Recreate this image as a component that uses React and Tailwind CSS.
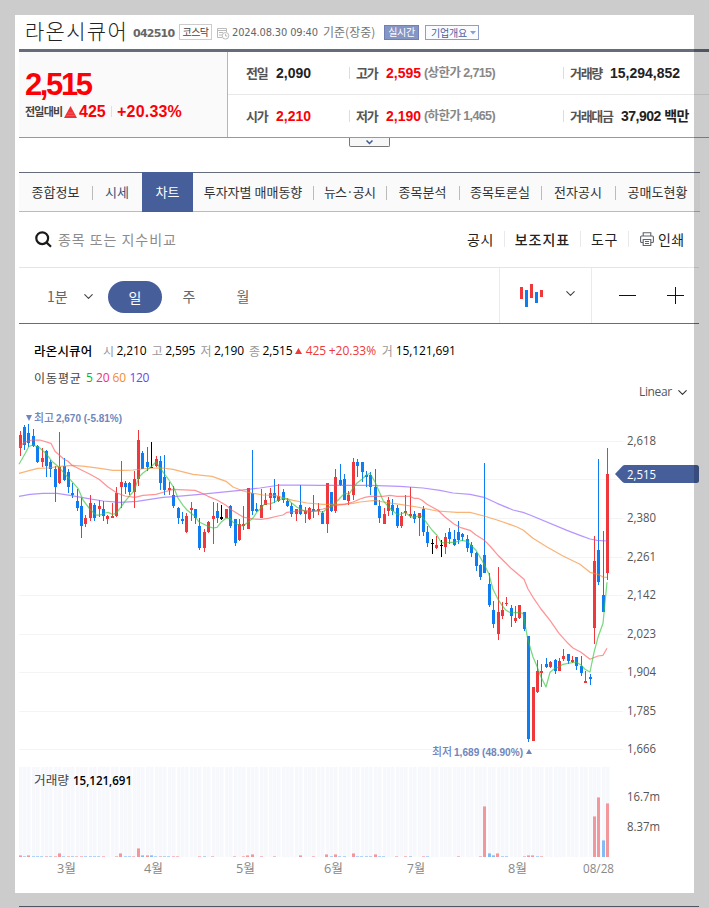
import { ChevronDown } from 'lucide-react';

const UP   = '#ee383b';
const DOWN = '#0f7df2';

const TABS = [
  { label: '종합정보',           cls: 'w-[73px]' },
  { label: '시세',               cls: 'w-[50px] text-[#33527f]', bar: true },
  { label: '차트',               cls: 'w-[51px]', active: true },
  { label: '투자자별 매매동향',  cls: 'w-[120px]' },
  { label: '뉴스·공시',          cls: 'w-[73px] tracking-[-0.8px]', bar: true },
  { label: '종목분석',           cls: 'w-[73px]', bar: true },
  { label: '종목토론실',         cls: 'w-[82px]', bar: true },
  { label: '전자공시',           cls: 'w-[74px]', bar: true },
  { label: '공매도현황',         cls: 'w-[85px]', bar: true },
];

// high, body top, body bottom, low, direction (u = up, d = down, n = flat)
const CANDLES = [
  [431, 435, 448, 456, 'u'], [425, 427, 445, 450, 'd'], [424, 433, 443, 447, 'd'], [429, 436, 446, 447, 'd'],
  [445, 446, 462, 463, 'd'], [448, 458, 462, 467, 'u'], [450, 451, 466, 477, 'd'], [460, 462, 469, 477, 'd'],
  [466, 469, 487, 502, 'd'], [432, 467, 483, 484, 'u'], [458, 466, 480, 481, 'd'], [469, 472, 487, 493, 'd'],
  [483, 493, 495, 498, 'd'], [489, 501, 508, 511, 'd'], [498, 506, 526, 538, 'd'], [515, 518, 524, 527, 'u'],
  [495, 503, 518, 521, 'u'], [503, 505, 518, 521, 'd'], [500, 506, 509, 517, 'u'], [501, 509, 516, 521, 'd'],
  [515, 516, 519, 524, 'u'], [503, 516, 518, 518, 'u'], [487, 493, 516, 517, 'u'], [461, 482, 487, 508, 'u'],
  [481, 483, 487, 494, 'd'], [482, 483, 492, 495, 'd'], [471, 479, 492, 508, 'u'], [430, 440, 479, 486, 'u'],
  [451, 453, 469, 469, 'd'], [447, 462, 467, 471, 'd'], [442, 467, 468, 468, 'n'], [456, 459, 466, 467, 'u'],
  [456, 461, 483, 490, 'd'], [455, 477, 490, 495, 'd'], [482, 488, 490, 495, 'u'], [486, 495, 506, 508, 'd'],
  [507, 508, 518, 524, 'd'], [512, 519, 521, 524, 'd'], [513, 516, 532, 533, 'u'], [502, 508, 510, 521, 'u'],
  [509, 509, 518, 524, 'd'], [518, 526, 548, 550, 'd'], [529, 532, 548, 552, 'u'], [521, 522, 532, 533, 'u'],
  [502, 516, 519, 544, 'u'], [503, 511, 518, 523, 'd'], [505, 517, 519, 520, 'n'], [509, 509, 518, 518, 'u'],
  [505, 506, 526, 528, 'd'], [519, 519, 543, 546, 'd'], [519, 524, 540, 541, 'u'], [506, 524, 526, 530, 'u'],
  [488, 488, 529, 529, 'u'], [450, 493, 511, 515, 'd'], [503, 509, 511, 512, 'd'], [489, 505, 518, 518, 'u'],
  [493, 500, 505, 505, 'u'], [488, 493, 498, 510, 'u'], [479, 493, 498, 503, 'd'], [484, 496, 501, 502, 'u'],
  [489, 492, 500, 503, 'd'], [498, 501, 506, 507, 'd'], [503, 506, 514, 517, 'd'], [509, 509, 514, 521, 'u'],
  [485, 505, 514, 515, 'd'], [507, 511, 514, 523, 'u'], [507, 508, 519, 520, 'u'], [495, 509, 511, 518, 'd'],
  [503, 509, 511, 515, 'u'], [511, 513, 524, 524, 'd'], [483, 483, 524, 533, 'u'], [492, 492, 511, 512, 'd'],
  [469, 477, 511, 513, 'u'], [464, 480, 485, 486, 'd'], [474, 479, 500, 500, 'd'], [491, 495, 501, 505, 'u'],
  [458, 462, 495, 500, 'u'], [459, 462, 466, 477, 'd'], [462, 462, 472, 482, 'd'], [471, 475, 477, 487, 'd'],
  [472, 475, 487, 495, 'd'], [469, 487, 505, 505, 'd'], [500, 506, 518, 523, 'd'], [508, 514, 524, 524, 'u'],
  [497, 500, 511, 516, 'u'], [499, 505, 511, 515, 'd'], [505, 508, 526, 528, 'd'], [512, 516, 526, 528, 'u'],
  [495, 511, 513, 516, 'u'], [487, 514, 516, 518, 'u'], [511, 514, 519, 523, 'd'], [513, 513, 518, 536, 'u'],
  [506, 509, 532, 536, 'd'], [526, 532, 543, 547, 'd'], [539, 543, 544, 554, 'n'], [536, 545, 548, 549, 'u'],
  [540, 545, 546, 557, 'n'], [533, 537, 547, 554, 'u'], [528, 532, 539, 544, 'd'], [530, 539, 545, 546, 'd'],
  [521, 532, 540, 544, 'd'], [533, 534, 537, 541, 'd'], [535, 539, 548, 552, 'd'], [542, 545, 553, 557, 'd'],
  [552, 553, 566, 571, 'd'], [564, 565, 577, 580, 'd'], [463, 555, 573, 573, 'd'], [573, 584, 605, 607, 'd'],
  [601, 610, 624, 628, 'd'], [567, 612, 634, 640, 'u'], [602, 610, 616, 619, 'u'], [597, 603, 604, 606, 'u'],
  [605, 608, 616, 627, 'd'], [606, 618, 621, 623, 'u'], [605, 605, 618, 619, 'u'], [612, 612, 629, 631, 'd'],
  [636, 636, 739, 742, 'd'], [687, 687, 741, 741, 'u'], [660, 671, 692, 693, 'u'], [664, 671, 673, 687, 'u'],
  [658, 664, 667, 668, 'd'], [661, 662, 667, 668, 'u'], [659, 660, 671, 674, 'd'], [658, 661, 671, 671, 'u'],
  [649, 656, 659, 661, 'u'], [654, 654, 661, 664, 'd'], [656, 660, 662, 663, 'u'], [657, 657, 666, 670, 'd'],
  [656, 666, 673, 676, 'd'], [671, 681, 683, 683, 'u'], [674, 677, 679, 685, 'd'], [536, 561, 628, 644, 'u'],
  [459, 550, 582, 585, 'd'], [531, 595, 612, 612, 'd'], [448, 474, 573, 580, 'u'],
];

const AVERAGES = [
  { color: '#8f5bff', points: '19,496 30,494 43,493 57,493 70,495 87,498 103,500.7 120,502 137,501 150,499 163,497 177,496 200,494 220,492 240,490 260,487.7 280,484.7 300,484.7 320,485 370,485 400,486 423,487.7 440,490 453,492.7 470,494 484,497 497,503 513,509.7 523,512 530,514.7 567,530 580,535 590,538.7 597,540 607,540.7' },
  { color: '#f78a2d', points: '19,473 30,470 38,468 48,467.7 60,466 73,465 85,466 100,468 113,470 123,470 133,469.7 150,467.7 163,467.7 173,469 193,474 212,476 226,481 233,486.7 243,490.7 253,493 263,494.7 275,495 282,497 293,500 307,502.7 323,504 340,504 353,503 360,501.7 375,500 383,501.7 400,504 417,506.7 437,510.7 457,512 470,512 484,515.7 497,519.7 503,521.7 517,526.7 523,529.7 533,538 547,546.7 563,555.7 580,564 590,572 598,574 603,576.7 607,577' },
  { color: '#ff5b60', points: '19,446.7 25,441.7 32,439.7 40,439.7 51,443 55,451 64,459 68,461 72,465 82,470 90,474 99,479 108,486.7 117,492.7 125,495.7 135,497 143,495 156,494 164,491.7 173,489 195,490 200,492 208,496 217,499.7 226,505 232,510 237,513 243,516.7 253,518.7 261,519 268,518 278,515.7 283,514.7 287,512 295,511 305,510 313,511 323,508.7 335,505 345,504 353,501.7 360,498.7 365,497 370,496 383,496 390,495 397,496 410,496 414,498 418,498 422,500 427,504 432,506.7 438,510 445,516.7 454,523.7 460,527 470,530 476,534.7 484,539.7 490,545.7 498,555 507,564 511,568 524,579 528,588.7 533,597 541,608.7 550,620 559,633 568,643 573,647.7 581,652 590,659 593,657.7 598,655.7 603,655 607,648' },
  { color: '#2fc43a', points: '19,464 25.3,453 29,446 33,444.7 39,447 46.7,454 52,461 60,468 65,474 70,479 78,488 83,499.7 90,509 96,514.7 100,514.7 105,512.7 108,512 112.7,514 116,513 120,508 125,501 130,495 134,490.7 139,476.7 143,472.7 148,469 152,465.7 156,461.7 160,467.7 164,473 169,479.7 174,487.7 178,497.7 183,505 187,509.7 191,513 195,516 199,521.7 204,524 208,526 213,527.7 217,527 221,522 226,518 230,518 233,522 237,524 243,525.7 248,522 253,517.7 257,511.7 261,508 265,503 270,503.7 274,502 278,500 283,498 288,499 292,503 297,507 303,510 308,511.7 313,511 318,510.7 323,512 327,508 333,505 337,501 341,496.7 345,492.7 349,494 353,487.7 357,482.7 362,479 366,475 370,473 375,481.7 379,491 383,500 388,506 392,510 397,514 401,513.7 405,512 410,516 414,517 418,515.7 422,516 427,523 432,529.7 437,535 441,542 445,542.7 450,542 454,542 458,541 462,540 467,541 471,545 476,550 480,556.7 484,563.7 489,574 493,589 498,599 502,605 506,610 511,612.7 518,612 523,613 528,640 533,656.7 537,666 541,676.7 546,686.7 550,672 555,668 559,666.7 563,664 568,663 576,661.7 581,664.7 585,669 590,671.7 594,652 598,637 603,623 607,582' },
];

// x, height, direction
const VOLUMES = [
  [20, 2, 'u'], [24, 1, 'd'], [28, 2, 'u'], [33, 1, 'd'], [37, 1, 'd'], [41, 1, 'd'], [46, 1, 'u'], [50, 1, 'd'],
  [55, 1, 'u'], [59, 4, 'u'], [63, 1, 'd'], [68, 1, 'u'], [72, 1, 'd'], [76, 1, 'u'], [81, 1, 'u'], [85, 1, 'd'],
  [90, 1, 'd'], [94, 1, 'd'], [98, 1, 'd'], [103, 1, 'u'], [116, 1, 'u'], [120, 4, 'u'], [125, 1, 'd'], [129, 1, 'd'],
  [133, 1, 'u'], [138, 9, 'u'], [142, 2, 'd'], [147, 2, 'u'], [151, 2, 'd'], [155, 1, 'd'], [160, 1, 'u'], [164, 1, 'd'],
  [168, 1, 'd'], [173, 1, 'u'], [177, 1, 'u'], [199, 1, 'u'], [204, 1, 'd'], [212, 1, 'u'], [234, 1, 'u'], [243, 1, 'u'],
  [247, 2, 'u'], [252, 3, 'u'], [261, 1, 'u'], [274, 1, 'u'], [300, 2, 'u'], [313, 1, 'u'], [326, 3, 'u'], [331, 1, 'd'],
  [335, 3, 'u'], [339, 1, 'd'], [344, 1, 'd'], [353, 4, 'u'], [357, 1, 'd'], [361, 1, 'd'], [366, 1, 'd'], [370, 1, 'd'],
  [375, 3, 'u'], [379, 1, 'd'], [383, 1, 'd'], [396, 1, 'u'], [405, 1, 'u'], [410, 1, 'd'], [423, 1, 'u'], [427, 1, 'd'],
  [458, 1, 'u'], [480, 1, 'u'], [484, 51, 'u'], [489, 4, 'd'], [493, 2, 'd'], [497, 4, 'u'], [502, 1, 'd'], [506, 1, 'd'],
  [524, 1, 'u'], [528, 2, 'u'], [532, 2, 'u'], [537, 1, 'd'], [541, 1, 'u'], [594, 41, 'u'], [598, 60, 'u'], [603, 17, 'd'],
  [607, 54, 'u'],
];

// the line at 479 has its label under the price tag
const GRID = [
  [441, '2,618'], [479, ''], [518, '2,380'], [557, '2,261'], [595, '2,142'],
  [634, '2,023'], [672, '1,904'], [711, '1,785'], [749, '1,666'],
];

const MONTHS = [
  [57, 19, '3월'], [144, 19, '4월'], [236, 19, '5월'], [324, 19, '6월'], [407, 18, '7월'], [508, 19, '8월'], [583, 31, '08/28'],
];

const sans  = "font-['Liberation_Sans','Noto_Sans_CJK_KR',sans-serif]";
const ui    = "font-['Open_Sans','Noto_Sans_CJK_KR',sans-serif]";
const kr    = "font-['Noto_Sans_CJK_KR',sans-serif]";
const small = "font-['DejaVu_Sans_Condensed','DejaVu_Sans','Noto_Sans_CJK_KR',sans-serif]";

const candleX = (i) => Math.floor(20.22 + i * 4.3835);
const tone = (d) => (d === 'u' ? UP : d === 'd' ? DOWN : '#000');

function Header() {
  return (
    <div className="flex h-[34px] pl-[6px] whitespace-nowrap">
      <h1 className={`w-[108px] text-[21px] leading-[30px] font-light tracking-[1.3px] text-[#222] ${kr}`}>라온시큐어</h1>
      <span className="w-[46px] pt-[10px] text-[11px] leading-[17px] font-bold text-[#666] tracking-[-0.75px] font-['DejaVu_Sans',sans-serif]">042510</span>
      <span className={`mt-[9px] w-[33px] h-4 border border-[#ccc] text-[10px] leading-[13px] text-center text-[#444] tracking-[-0.6px] ${kr}`}>코스닥</span>
      <svg className="mt-[12px] ml-[5px]" width="13" height="13" viewBox="0 0 13 13" fill="none" stroke="#bbb">
        <path d="M5 10.5H.5V1.5h9V5M.5 3.5h9M2 5.5h4M2 8h3" />
        <circle cx="8.5" cy="8.8" r="3.3" />
        <path d="M8.5 6.8v2.2h1.8" />
      </svg>
      <span className={`ml-[2px] w-[91px] pt-[9px] text-[11px] leading-[17px] text-[#666] tracking-[-0.15px] ${small}`}>2024.08.30 09:40</span>
      <span className={`w-[61px] pt-[8px] text-[12px] leading-[17px] text-[#777] ${kr}`}>기준(장중)</span>
      <span className={`mt-[10px] w-[35px] h-[15px] bg-[#8595c5] border border-[#7080b5] text-[10px] leading-[12px] text-center text-white tracking-[-0.3px] ${kr}`}>실시간</span>
      <span className={`mt-[10px] ml-[6px] w-[54px] h-[15px] border border-[#8f9dcb] flex items-center pl-[5px] text-[10px] leading-[12px] text-[#4a5fa3] tracking-[-0.2px] bg-[#fafbff] ${kr}`}>
        기업개요
        <svg className="ml-[3px]" width="6" height="4" viewBox="0 0 6 4"><path d="M0 0h6L3 3.5z" fill="#8f9dcb" /></svg>
      </span>
    </div>
  );
}

function Quote({ label, labelCls, value, valueCls, note, bar }) {
  return (
    <div className="flex items-center h-[42px] whitespace-nowrap">
      {bar && <i className="w-px h-3 bg-[#ddd] mr-[6px]" />}
      <span className={`text-[13px] font-bold text-[#555] tracking-[-1.3px] ${kr} ${labelCls}`}>{label}</span>
      <b className={`text-[14px] ${sans} ${valueCls}`}>{value}</b>
      {note && <span className={`ml-[3px] text-[12.5px] font-bold text-[#888] tracking-[-0.6px] ${sans}`}>{note}</span>}
    </div>
  );
}

function Summary() {
  return (
    <div className="border-t-[3px] border-[#656c7a] border-b border-b-[#999] h-[89px] flex">
      <div className="w-[209px] shrink-0 bg-[#fafafa] border-r border-[#b5b5b5] pl-[6px] whitespace-nowrap">
        <div className={`h-[49px] pt-[18px] text-[31px] leading-[30px] font-bold text-[#fb0007] tracking-[-2.4px] ${sans}`}>2,515</div>
        <div className={`flex items-center h-[21px] text-[#fb0007] font-bold text-[16px] tracking-[0px] ${sans}`}>
          <span className={`w-[39px] text-[11px] text-[#444] tracking-[-0.8px] ${kr}`}>전일대비</span>
          <svg width="13" height="12" viewBox="0 0 13 12"><path d="M6.5 0L13 12H0z" fill="#ee3238" /><path d="M2.500 9.500h8M4 7h5" stroke="#f7777b" strokeWidth=".6" /></svg>
          <span className="ml-[2px] w-[32px]">425</span>
          <i className="w-px h-[11px] bg-[#d8e2ec] mr-[5px]" />
          <span className="tracking-[0.2px]">+20.33%</span>
        </div>
      </div>
      <div className="flex-1 grid grid-cols-[121px_214px_1fr] grid-rows-[43px_42px]">
        <div className="border-b border-[#e8e8e8] pl-[18px]">
          <Quote label="전일" labelCls="w-[30px]" value="2,090" valueCls="text-[#222]" />
        </div>
        <div className="border-b border-[#e8e8e8]">
          <Quote bar label="고가" labelCls="w-[30px]" value="2,595" valueCls="text-[#fb0007]" note="(상한가 2,715)" />
        </div>
        <div className="border-b border-[#e8e8e8]">
          <Quote bar label="거래량" labelCls="w-[40px]" value="15,294,852" valueCls="text-[#222]" />
        </div>
        <div className="pl-[18px]">
          <Quote label="시가" labelCls="w-[30px]" value="2,210" valueCls="text-[#fb0007]" />
        </div>
        <Quote bar label="저가" labelCls="w-[30px]" value="2,190" valueCls="text-[#fb0007]" note="(하한가 1,465)" />
        <Quote bar label="거래대금" labelCls="w-[51px]" value="37,902 백만" valueCls="text-[#222] tracking-[-0.5px]" />
      </div>
    </div>
  );
}

function Tabs() {
  return (
    <div className={`flex w-[681px] h-10 border-t border-b border-t-[#656c7a] border-b-[#bbb] bg-[#fafafa] text-[13px] text-[#333] whitespace-nowrap ${kr}`}>
      {TABS.map((t) => (
        <div key={t.label} className={`relative flex items-center justify-center pb-px ${t.cls} ${t.active ? 'bg-[#465f9b] text-white -my-px' : ''}`}>
          {t.bar && <i className="absolute left-0 top-[13px] w-px h-[14px] bg-[#bbb]" />}
          {t.label}
        </div>
      ))}
    </div>
  );
}

function SearchRow() {
  return (
    <div className={`flex items-center w-[680px] h-14 border-b border-[#e5e5e5] pl-4 pb-px text-[14px] text-[#222] whitespace-nowrap ${kr}`}>
      <svg width="17" height="17" viewBox="0 0 17 17" fill="none" stroke="#1a1a1a" strokeWidth="2.2">
        <circle cx="7.2" cy="7.2" r="5.9" /><path d="M11.4 11.4l4.6 4.4" />
      </svg>
      <span className="ml-[6px] w-[409px] text-[#8c8c8c] tracking-[0.95px]">종목 또는 지수비교</span>
      <span className="w-[37px] tracking-[0.6px]">공시</span>
      <span className="w-[76px] h-4 border-l border-[#e8e8ee] flex items-center justify-center font-medium tracking-[1px]">보조지표</span>
      <span className="w-12 h-4 border-l border-[#e8e8ee] flex items-center justify-center tracking-[0.6px]">도구</span>
      <span className="h-4 border-l border-[#e8e8ee] flex items-center pl-[11px] tracking-[0.4px]">
        <svg className="mr-1" width="14" height="15" viewBox="0 0 14 15" fill="none" stroke="#5f636b" strokeWidth="1.1">
          <path d="M3.2 4V.8h7.6V4M3.2 10.5H1.6a1 1 0 01-1-1V5a1 1 0 011-1h10.8a1 1 0 011 1v4.500a1 1 0 01-1 1h-1.6M3.2 7.500h7.600v6H3.200zM5 9.500h4M5 11.500h4" />
        </svg>
        인쇄
      </span>
    </div>
  );
}

function PeriodRow() {
  return (
    <div className={`flex items-center w-[680px] h-14 border-b border-[#656c7a] text-[14px] text-[#666] ${kr}`}>
      <span className="ml-7 w-[34px] pt-[2px]">1분</span>
      <ChevronDown size={15} strokeWidth={1.8} className="text-[#444] mt-[2px]" />
      <span className="ml-[12px] w-[54px] h-8 rounded-full bg-[#465f9b] text-white flex items-center justify-center mt-[3px]">일</span>
      <span className="w-[54px] text-center pt-[2px]">주</span>
      <span className="w-[54px] text-center pt-[2px]">월</span>
      <div className="ml-auto w-[92px] h-full border-l border-[#ebebee] flex pl-5 pt-4">
        <svg width="24" height="24" viewBox="0 0 24 24" shapeRendering="crispEdges">
          <path d="M0 3h3v12H0zM10 0h3v14h-3zM20 6h3v7h-3z" fill={UP} />
          <path d="M5 6h3v17H5zM15 8h3v11h-3z" fill={DOWN} />
        </svg>
        <ChevronDown size={15} strokeWidth={1.8} className="ml-[19px] mt-[2px] text-[#444]" />
      </div>
      <div className="w-[108px] h-full border-l border-[#ebebee] flex pl-[27px] pt-[19px]">
        <svg width="17" height="17" viewBox="0 0 17 17" stroke="#111"><path d="M0 8.500h17" /></svg>
        <svg className="ml-[31px]" width="17" height="17" viewBox="0 0 17 17" stroke="#111"><path d="M0 8.500h17M8.500 0v17" /></svg>
      </div>
    </div>
  );
}

function Legend() {
  return (
    <div className={`relative h-[81px] pl-[15px] pt-[18px] text-[12px] leading-[17px] text-black whitespace-nowrap ${ui}`}>
      <div className="flex">
        <span className={`w-[69px] text-[12.5px] font-medium tracking-[0.2px] ${kr}`}>라온시큐어</span>
        {[['시', '2,210'], ['고', '2,595'], ['저', '2,190'], ['종', '2,515']].map(([k, v]) => (
          <span key={k} className="flex w-[48.7px]">
            <span className={`w-[13.500px] text-[#999] ${kr}`}>{k}</span>
            <span className="tracking-[-0.1px] font-medium">{v}</span>
          </span>
        ))}
        <span className="flex items-center text-[#ee383b] font-medium -ml-[3px]">
          <svg width="7" height="6" viewBox="0 0 7 6" className="mr-[4px]"><path d="M3.500 0L7 6H0z" fill={UP} /></svg>
          <span className="w-[23px] tracking-[-0.1px]">425</span>
          <span className="w-[53px]">+20.33%</span>
        </span>
        <span className={`w-[14px] text-[#999] ${kr}`}>거</span>
        <span className="tracking-[-0.1px] font-medium">15,121,691</span>
      </div>
      <div className="flex mt-[10px]">
        <span className={`w-[52px] text-[#444] tracking-[0.9px] ${kr}`}>이동평균</span>
        <span className="w-[10px] text-[#00b833]">5</span>
        <span className="w-[16.500px] text-[#f0307a]">20</span>
        <span className="w-[17px] text-[#f58a2d]">60</span>
        <span className="tracking-[-0.4px] text-[#6f45e6]">120</span>
      </div>
      <div className="absolute left-[620px] top-[59px] flex items-center text-[#555] tracking-[-0.35px]">
        Linear
        <ChevronDown size={15} strokeWidth={1.8} className="ml-[3px] mt-[2px] text-[#333]" />
      </div>
    </div>
  );
}

function PriceChart() {
  return (
    <svg className="block -ml-[19px] w-[709px] h-[488px]" viewBox="0 405 709 488">
      {/* grid and price axis */}
      <g className={`text-[12px] ${ui}`} fill="#555">
        {GRID.map(([y, label]) => (
          <g key={y}>
            <rect x="19" y={y} width="604" height="1" fill="#f3f4f6" />
            {label && <text x="627" y={y + 4} textLength="29" lengthAdjust="spacingAndGlyphs">{label}</text>}
          </g>
        ))}
        <text x="627" y="801" textLength="33" lengthAdjust="spacingAndGlyphs">16.7m</text>
        <text x="627" y="831" textLength="33" lengthAdjust="spacingAndGlyphs">8.37m</text>
      </g>

      {/* volume pane */}
      <g shapeRendering="crispEdges">
        {CANDLES.map((c, i) => (
          <g key={i}>
            <rect x={candleX(i) - 1} y="767" width="4" height="90" fill="#fafbfe" />
            <rect x={candleX(i) - 1} y="767" width="3" height="90" fill="#f6f8fc" />
          </g>
        ))}
        {VOLUMES.map(([x, h, d]) => (
          <g key={x} fill={tone(d)}>
            <rect x={x - 1} y={857 - h} width="3" height="1" opacity=".3" />
            {h > 1 && <rect x={x - 1} y={858 - h} width="3" height={h - 1} opacity=".5" />}
          </g>
        ))}
      </g>

      {/* candles */}
      <g shapeRendering="crispEdges">
        {CANDLES.map(([high, top, bottom, low, d], i) => (
          <g key={i} fill={tone(d)}>
            <rect x={candleX(i)} y={high} width="1" height={low - high} />
            <rect x={candleX(i) - 1} y={top} width="3" height={bottom - top} />
          </g>
        ))}
      </g>

      {AVERAGES.map((a) => (
        <polyline key={a.color} points={a.points} fill="none" stroke={a.color} strokeWidth="1.25" strokeOpacity=".65" strokeLinejoin="round" transform="translate(0 .3)" />
      ))}

      {/* extremes */}
      <g className={`text-[11px] font-bold ${sans}`} fill="#6f86bb">
        <path d="M26 415h6l-3 6z" />
        <text x="34" y="422" className={`font-medium ${kr}`} textLength="20" lengthAdjust="spacingAndGlyphs">최고</text>
        <text x="56" y="422" textLength="66" lengthAdjust="spacingAndGlyphs">2,670 (-5.81%)</text>
        <text x="432" y="756" className={`font-medium ${kr}`} textLength="20" lengthAdjust="spacingAndGlyphs">최저</text>
        <text x="454" y="756" textLength="69" lengthAdjust="spacingAndGlyphs">1,689 (48.90%)</text>
        <path d="M526 754h6l-3-5z" />
      </g>

      {/* current price tag */}
      <path d="M615 474l7.500-8q1-1 2.500-1h71.500q2.500 0 2.500 2.500v13q0 2.500-2.500 2.500h-71.500q-1.500 0-2.500-1z" fill="#465f9b" />
      <text x="627" y="479" className={`text-[12px] ${ui}`} fill="#fff" textLength="29" lengthAdjust="spacingAndGlyphs">2,515</text>

      <g className={`text-[12px] ${ui}`}>
        <text x="34" y="785" fill="#444" textLength="35" lengthAdjust="spacingAndGlyphs">거래량</text>
        <text x="73" y="785" className="font-semibold" fill="#000" textLength="59" lengthAdjust="spacingAndGlyphs">15,121,691</text>
        {MONTHS.map(([x, w, label]) => (
          <text key={label} x={x} y="873" fill="#888" textLength={w} lengthAdjust="spacingAndGlyphs">{label}</text>
        ))}
      </g>
    </svg>
  );
}

export default function App() {
  return (
    <div className="relative w-[709px] h-[908px] overflow-hidden bg-white pl-[19px] pt-[15px]">
      <Header />
      <Summary />
      <div className="h-[34px] pl-[330px]">
        <button className="flex items-center justify-center w-[41px] h-[9px] border border-t-0 border-[#777] rounded-b-xs bg-[#f7f7f7]">
          <svg width="7" height="5" viewBox="0 0 7 5" fill="none" stroke="#3d5a96" strokeWidth="1.500"><path d="M.5.5l3 3 3-3" /></svg>
        </button>
      </div>
      <Tabs />
      <SearchRow />
      <PeriodRow />
      <Legend />
      <PriceChart />
      <div className="mt-[13px] w-[680px] h-px bg-[#656c7a]" />

      {/* shaded frame over the page edges */}
      <div className="absolute inset-0 border-[15px] border-black/20 pointer-events-none" />
    </div>
  );
}
